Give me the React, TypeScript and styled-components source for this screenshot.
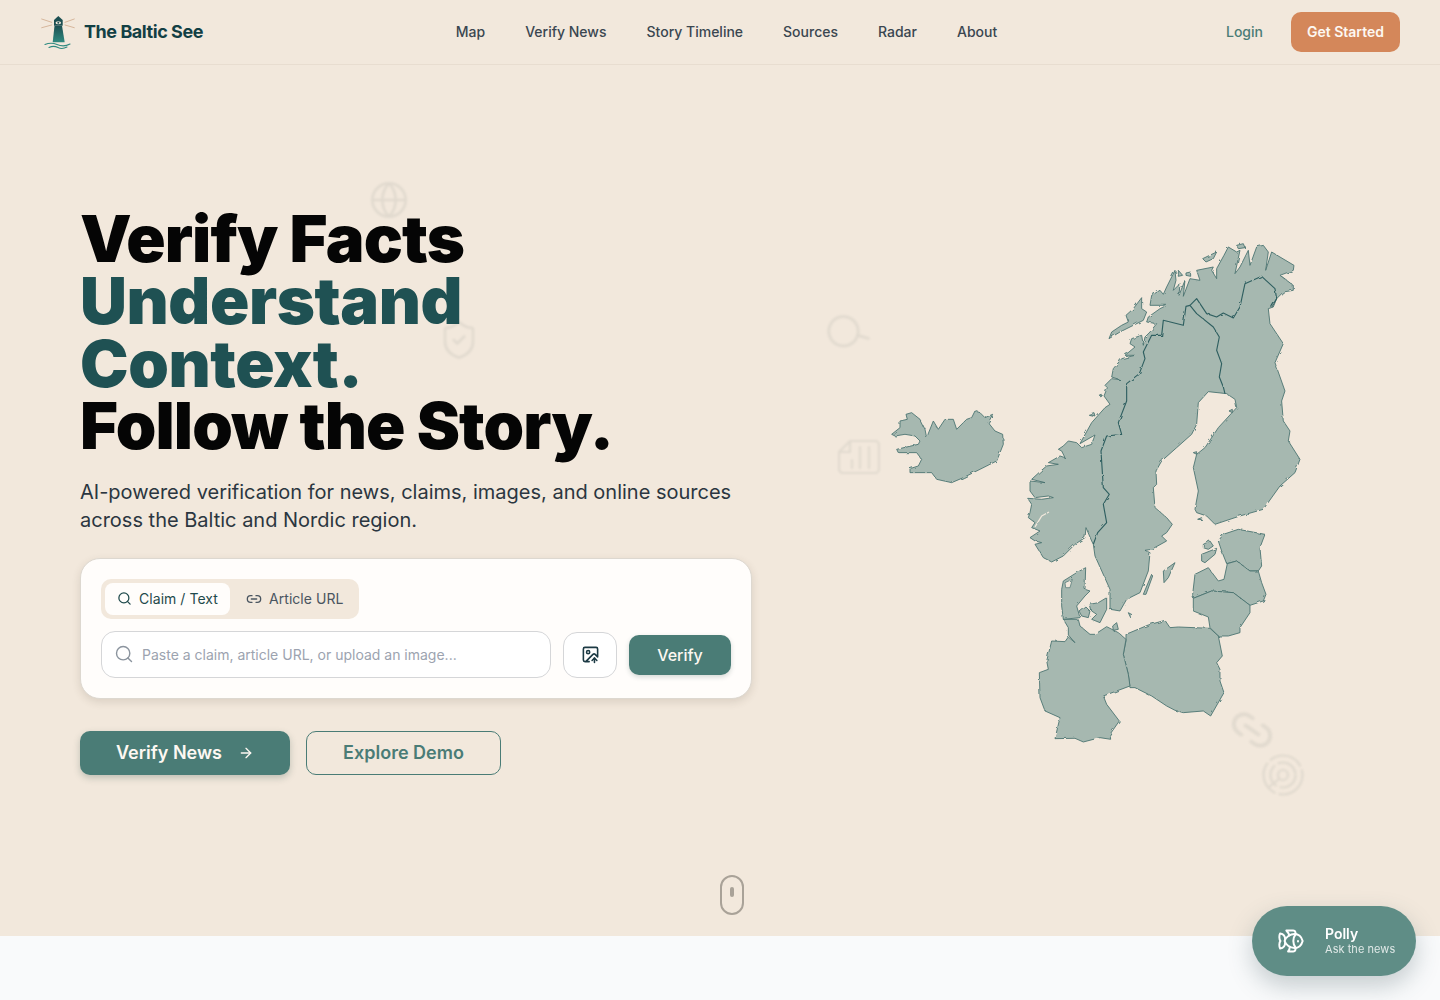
import styled, { createGlobalStyle } from "styled-components";
import { ArrowRight, Fish, Globe, ImageUp, Link2, Search, ShieldCheck } from "lucide-react";

const GlobalStyle = createGlobalStyle`
  * { box-sizing: border-box; }
  html, body { margin: 0; padding: 0; background: #f2e8dc; }
  body { font-family: "Inter", "Liberation Sans", sans-serif; color: #1f2a30; overflow: hidden; }
`;

const navItems = ["Map", "Verify News", "Story Timeline", "Sources", "Radar", "About"];

// traced by hand, this group is 3x from (1020,230)
const nordic =
  "M255 463 L275 443 L300 446 L275 438 L280 413 L305 383 L345 373 L315 373 L345 348 L330 338 L335 323 L365 313 L370 343 L375 318 L390 303 L410 278 L380 273 L385 258 L420 233 L440 223 L390 223 L395 193 L420 178 L430 190 L440 168 L465 118 L468 148 L460 178 L480 158 L477 193 L495 148 L490 196 L510 143 L540 148 L530 118 L580 108 L575 118 L590 143 L590 113 L612 73 L625 48 L650 63 L660 58 L645 128 L660 108 L685 58 L690 103 L710 48 L730 43 L745 63 L737 118 L755 63 L780 78 L822 103 L820 118 L780 133 L800 148 L820 163 L820 178 L790 183 L770 203 L760 228 L745 233 L750 278 L790 338 L765 395 L795 480 L785 510 L790 570 L810 600 L805 630 L840 685 L825 725 L780 765 L730 835 L660 855 L585 880 L560 855 L530 845 L525 835 L535 780 L520 710 L530 670 L555 650 L595 590 L650 530 L645 505 L620 488 L565 482 L535 515 L530 580 L515 610 L470 650 L425 690 L408 720 L410 760 L400 770 L405 830 L440 860 L457 880 L440 905 L425 915 L440 930 L395 955 L375 958 L390 965 L385 1020 L360 1085 L320 1105 L300 1140 L270 1135 L270 1075 L225 975 L220 940 L215 930 L198 890 L195 920 L165 940 L130 975 L95 993 L70 980 L45 940 L65 935 L45 930 L30 920 L60 900 L35 890 L45 875 L25 860 L30 845 L35 820 L23 802 L65 805 L100 800 L85 795 L45 800 L30 780 L30 750 L75 755 L35 745 L60 722 L80 705 L115 700 L85 695 L120 675 L135 680 L125 660 L115 655 L130 645 L145 630 L170 635 L185 650 L215 640 L225 612 L180 638 L215 575 L255 530 L270 520 L252 495 L262 470 Z";
const nordicIslands = [
  "M267 323 L275 303 L305 283 L325 273 L318 253 L340 233 L365 200 L365 233 L380 243 L370 268 L330 288 L300 303 Z",
  "M498 126 L512 123 L512 136 L498 133 Z",
  "M475 118 L488 133 L475 136 Z",
  "M548 83 L590 63 L580 83 L558 93 Z",
  "M650 43 L670 38 L675 50 L655 53 Z",
  "M627 540 L637 535 L637 545 Z",
  "M520 665 L530 662 L530 670 Z",
  "M533 865 L545 860 L545 866 Z",
  "M238 492 L244 490 L242 498 Z",
  "M205 550 L222 545 L225 555 Z",
];
const nordicBorders = [
  "M220 940 L233 905 L260 875 L250 820 L268 790 L250 770 L243 660 L260 615 L305 610 L295 575 L320 510 L320 458 L358 428 L375 383 L370 363 L395 313 L425 313 L430 268 L490 283 L498 226 L510 223",
  "M510 223 L530 248 L580 288 L598 318 L590 358 L605 398 L598 438 L610 468 L615 488",
  "M510 223 L530 203 L560 248 L590 258 L610 246 L640 261 L660 228 L675 158 L725 136 L765 173 L770 203 L755 228",
];
const stavangerFjord = "M45 888 L65 855 L87 843";

// this group is 3x from (1020,510)
const southParts = [
  "M595 90 L610 70 L655 55 L735 70 L720 110 L725 165 L715 180 L690 180 L650 150 L620 158 L605 120 Z",
  "M518 250 L525 190 L565 170 L595 210 L612 205 L622 158 L650 150 L690 180 L715 180 L725 215 L738 250 L730 270 L690 283 L640 245 L575 240 L520 262 Z",
  "M520 262 L575 240 L640 245 L690 283 L690 305 L660 350 L660 365 L625 375 L595 375 L570 350 L565 318 L520 300 Z",
  "M318 370 L385 342 L435 328 L450 350 L475 348 L570 352 L595 375 L607 435 L590 455 L600 475 L600 510 L612 545 L572 615 L550 600 L490 605 L465 598 L440 585 L395 555 L375 545 L345 530 L330 530 L325 490 L310 430 L318 390 Z",
  "M130 325 L175 325 L180 345 L210 370 L225 370 L260 347 L295 365 L318 385 L310 430 L325 490 L330 525 L250 555 L260 580 L298 630 L270 670 L272 685 L240 680 L190 693 L165 682 L105 683 L120 620 L75 600 L60 560 L58 485 L85 475 L80 450 L95 390 L135 392 L145 378 L165 395 L145 372 L145 350 Z",
  "M125 235 L130 210 L170 185 L197 170 L195 235 L210 240 L195 255 L170 285 L180 320 L130 325 L125 285 Z",
  "M177 300 L195 285 L210 300 L205 320 L185 315 Z",
  "M210 280 L235 275 L260 260 L260 295 L240 335 L215 325 L230 310 L215 300 Z",
  "M430 180 L465 155 L445 200 L432 215 Z",
  "M370 250 L395 190 L398 195 L378 250 Z",
  "M325 305 L338 312 L332 320 Z",
  "M278 345 L290 335 L295 355 L280 358 Z",
  "M550 100 L570 90 L580 105 L565 115 L550 110 Z",
  "M545 130 L590 112 L585 130 L555 155 L545 150 Z",
];
const limfjord = "M135 215 L157 205 L150 230 L137 230 Z";

// this one 3x from (820,300)
const iceland =
  "M215 400 L240 380 L240 360 L262 355 L258 340 L275 335 L300 355 L315 385 L320 410 L340 360 L355 385 L375 355 L400 355 L410 385 L430 365 L440 355 L455 350 L465 330 L480 335 L495 350 L518 340 L505 365 L525 390 L548 400 L550 430 L530 480 L480 505 L430 530 L395 545 L350 535 L335 515 L270 515 L270 503 L295 495 L305 475 L290 455 L235 455 L230 445 L295 430 L300 420 L285 405 L255 400 L225 405 Z";

export default function App() {
  return (
    <>
      <GlobalStyle />
      <Header>
        <Brand>
          <LighthouseLogo />
          <BrandName>The Baltic See</BrandName>
        </Brand>
        <Nav>
          {navItems.map((item) => (
            <NavLink key={item}>{item}</NavLink>
          ))}
        </Nav>
        <HeaderActions>
          <LoginLink>Login</LoginLink>
          <GetStarted>Get Started</GetStarted>
        </HeaderActions>
      </Header>

      <Hero>
        <Decor $x={369} $y={115}>
          <Globe size={40} strokeWidth={1.6} />
        </Decor>
        <Decor $x={438} $y={254}>
          <ShieldCheck size={42} strokeWidth={1.5} />
        </Decor>
        <Decor $x={824} $y={245} $rotate={-29}>
          <Search size={44} strokeWidth={1.5} />
        </Decor>
        <Decor $x={838} $y={375}>
          <ChartSheet />
        </Decor>
        <Decor $x={1228} $y={641} $rotate={35}>
          <Link2 size={48} strokeWidth={1.8} />
        </Decor>
        <Decor $x={1261} $y={688}>
          <RadarRings />
        </Decor>

        <HeroCopy>
          <Headline>
            Verify Facts
            <br />
            <Accent>
              Understand
              <br />
              Context.
            </Accent>
            <br />
            Follow the Story.
          </Headline>
          <Lead>
            AI-powered verification for news, claims, images, and online sources across the Baltic
            and Nordic region.
          </Lead>

          <VerifyCard>
            <Tabs>
              <Tab $active>
                <Search size={15} strokeWidth={2} />
                Claim / Text
              </Tab>
              <Tab>
                <Link2 size={16} strokeWidth={2} />
                Article URL
              </Tab>
            </Tabs>
            <InputRow>
              <InputBox>
                <Search size={20} strokeWidth={1.7} color="#8b949e" />
                <ClaimInput placeholder="Paste a claim, article URL, or upload an image..." />
              </InputBox>
              <UploadButton aria-label="Upload image">
                <ImageUp size={19} strokeWidth={2} />
              </UploadButton>
              <VerifyButton>Verify</VerifyButton>
            </InputRow>
          </VerifyCard>

          <Actions>
            <PrimaryCta>
              Verify News
              <ArrowRight size={16} strokeWidth={2} />
            </PrimaryCta>
            <SecondaryCta>Explore Demo</SecondaryCta>
          </Actions>
        </HeroCopy>

        <MapSvg viewBox="880 230 430 520" aria-hidden="true">
          <defs>
            <filter id="coast" x="-5%" y="-5%" width="110%" height="110%">
              <feTurbulence type="fractalNoise" baseFrequency="0.16" numOctaves="2" seed="4" />
              <feDisplacementMap in="SourceGraphic" scale="2.6" />
            </filter>
          </defs>
          <g filter="url(#coast)">
            <g transform="translate(820 300) scale(0.3333)" strokeWidth={2.6}>
              <path d={iceland} />
            </g>
            <g transform="translate(1020 230) scale(0.3333)" strokeWidth={2.6}>
              <path d={nordic} />
              {nordicIslands.map((d) => (
                <path key={d} d={d} />
              ))}
              <WaterLine d={stavangerFjord} />
              {nordicBorders.map((d) => (
                <BorderLine key={d} d={d} />
              ))}
            </g>
            <g transform="translate(1020 510) scale(0.3333)" strokeWidth={2.6}>
              {southParts.map((d) => (
                <path key={d} d={d} />
              ))}
              <WaterHole d={limfjord} />
            </g>
          </g>
        </MapSvg>

        <ScrollMouse>
          <ScrollDot />
        </ScrollMouse>
      </Hero>

      <NextSection />

      <PollyButton>
        <Fish size={28} strokeWidth={1.7} />
        <PollyText>
          <PollyName>Polly</PollyName>
          <PollySub>Ask the news</PollySub>
        </PollyText>
      </PollyButton>
    </>
  );
}

function LighthouseLogo() {
  return (
    <svg width="36" height="36" viewBox="0 0 36 36" fill="none">
      <defs>
        <linearGradient id="tower" x1="0" y1="0" x2="0" y2="1">
          <stop offset="0" stopColor="#1c4f52" />
          <stop offset="1" stopColor="#2f8a80" />
        </linearGradient>
      </defs>
      <g stroke="#d2b094" strokeWidth="0.9" strokeLinecap="round">
        <path d="M1.7 5 L11.7 8.3" />
        <path d="M1.7 13.7 L11.7 11" />
        <path d="M25 8.3 L34.3 5" />
        <path d="M25 11 L34.3 13.7" />
      </g>
      <path d="M18.3 2 L22.7 6 L14 6 Z" fill="#1c4f52" />
      <rect x="14" y="6" width="8.7" height="5.7" fill="#1c4f52" />
      <ellipse cx="18.3" cy="8.8" rx="2.8" ry="1.5" fill="#f2e8dc" />
      <circle cx="18.3" cy="8.8" r="1" fill="#1c4f52" />
      <path d="M14.5 11.7 L22 11.7 L24.7 28.3 L12.7 28.3 Z" fill="url(#tower)" />
      <g stroke="#2f8a80" strokeWidth="1.1" strokeLinecap="round">
        <path d="M5 30.5 C9 28.8 13 28.8 17 30.5 S26 32.2 30 30" />
        <path d="M9 33.5 C12 32 15 32 18 33.5 S24 34.6 27 33" />
      </g>
    </svg>
  );
}

function ChartSheet() {
  return (
    <svg width="42" height="34" viewBox="0 0 42 34" fill="none" stroke="currentColor" strokeWidth="2.2" strokeLinejoin="round">
      <path d="M1 12 L12 1 H37 a4 4 0 0 1 4 4 V29 a4 4 0 0 1 -4 4 H5 a4 4 0 0 1 -4 -4 Z" />
      <path d="M12 1 V12 H1" />
      <path d="M14 28 V20 M22 28 V7 M31 28 V7" strokeLinecap="round" />
    </svg>
  );
}

function RadarRings() {
  return (
    <svg width="44" height="44" viewBox="0 0 44 44" fill="none" stroke="currentColor" strokeWidth="2.2" strokeLinecap="round">
      <circle cx="22" cy="22" r="19.5" strokeDasharray="34 5" />
      <circle cx="22" cy="22" r="12.5" strokeDasharray="22 5" />
      <circle cx="22" cy="22" r="5" />
      <path d="M18 26 L8 34" />
    </svg>
  );
}

const Header = styled.header`
  height: 65px;
  padding: 0 40px;
  display: grid;
  grid-template-columns: 1fr auto 1fr;
  align-items: center;
  border-bottom: 1px solid #e8ddd0;
  background: #f2e8dc;
`;

const Brand = styled.div`
  display: flex;
  align-items: center;
  gap: 8px;
`;

const BrandName = styled.span`
  margin-bottom: 2px;
  font-size: 18px;
  font-weight: 700;
  letter-spacing: -0.45px;
  color: #123f44;
`;

const Nav = styled.nav`
  display: flex;
  gap: 40px;
  margin: 0 0 2px 13px;
`;

const NavLink = styled.a`
  font-size: 14px;
  font-weight: 500;
  color: #3a4650;
`;

const HeaderActions = styled.div`
  display: flex;
  justify-content: flex-end;
  align-items: center;
  gap: 28px;
`;

const LoginLink = styled.a`
  margin-bottom: 2px;
  font-size: 14px;
  font-weight: 500;
  color: #4a7c76;
`;

const GetStarted = styled.button`
  width: 109px;
  height: 40px;
  padding: 0 0 2px;
  border: none;
  border-radius: 10px;
  background: #d4875a;
  color: #fdf8f2;
  font: 600 14px "Inter", sans-serif;
`;

const Hero = styled.section`
  position: relative;
  height: 871px;
  padding: 0 80px 20px;
  display: grid;
  grid-template-columns: 672px 1fr;
  column-gap: 128px;
  align-items: center;
  background: #f2e8dc;
`;

const Decor = styled.div<{ $x: number; $y: number; $rotate?: number }>`
  position: absolute;
  left: ${(p) => p.$x}px;
  top: ${(p) => p.$y}px;
  display: flex;
  color: #5d6b66;
  opacity: 0.11;
  filter: blur(0.8px);
  transform: rotate(${(p) => p.$rotate ?? 0}deg);
`;

const HeroCopy = styled.div`
  position: relative;
  display: flex;
  flex-direction: column;
`;

const Headline = styled.h1`
  margin: 1px 0 0;
  font-family: "Inter", "Liberation Sans", sans-serif;
  font-size: 65px;
  line-height: 62.5px;
  font-weight: 900;
  letter-spacing: -0.9px;
  color: #050505;
`;

const Accent = styled.span`
  letter-spacing: -0.4px;
  color: #1f5153;
`;

const Lead = styled.p`
  margin: 20px 0 0;
  width: 672px;
  font-size: 20px;
  line-height: 28px;
  color: #2b3640;
`;

const VerifyCard = styled.div`
  margin-top: 24px;
  height: 141px;
  padding: 20px;
  border: 1px solid #ddd8d0;
  border-radius: 20px;
  background: #fffdfb;
  box-shadow: 0 3px 8px rgba(70, 60, 45, 0.14);
`;

const Tabs = styled.div`
  display: inline-flex;
  gap: 4px;
  height: 40px;
  padding: 4px;
  border-radius: 10px;
  background: #f2e8dc;
`;

const Tab = styled.button<{ $active?: boolean }>`
  display: flex;
  align-items: center;
  gap: 7px;
  width: ${(p) => (p.$active ? "125px" : "121px")};
  height: 32px;
  padding: 0 0 0 12px;
  border: none;
  border-radius: 8px;
  background: ${(p) => (p.$active ? "#fffdfb" : "transparent")};
  color: ${(p) => (p.$active ? "#1f4a4c" : "#4a5560")};
  font: 400 14px "Inter", sans-serif;
  letter-spacing: 0.05px;
`;

const InputRow = styled.div`
  display: flex;
  align-items: flex-start;
  margin-top: 12px;
`;

const InputBox = styled.div`
  width: 450px;
  height: 47px;
  padding: 0 12px;
  display: flex;
  align-items: center;
  gap: 8px;
  border: 1px solid #d5d6d8;
  border-radius: 14px;
  background: #fff;
`;

const ClaimInput = styled.input`
  flex: 1;
  border: none;
  outline: none;
  background: none;
  padding: 0;
  font: 400 14px "Inter", sans-serif;
  &::placeholder {
    color: #9ca3af;
    opacity: 1;
  }
`;

const UploadButton = styled.button`
  width: 54px;
  height: 46px;
  margin: 1px 0 0 12px;
  display: flex;
  align-items: center;
  justify-content: center;
  border: 1px solid #d5d6d8;
  border-radius: 14px;
  background: #fff;
  color: #1c3a44;
`;

const VerifyButton = styled.button`
  width: 102px;
  height: 40px;
  margin: 4px 0 0 12px;
  border: none;
  border-radius: 10px;
  background: #4a7c76;
  color: #fdf8f2;
  font: 500 16px "Inter", sans-serif;
  box-shadow: 0 2px 5px rgba(40, 70, 65, 0.2);
`;

const Actions = styled.div`
  display: flex;
  gap: 16px;
  margin-top: 32px;
`;

const PrimaryCta = styled.button`
  width: 210px;
  height: 44px;
  display: flex;
  align-items: center;
  justify-content: center;
  gap: 16px;
  border: none;
  border-radius: 10px;
  background: #4a7c76;
  color: #fdf8f2;
  font: 600 18px "Inter", sans-serif;
  box-shadow: 0 3px 7px rgba(40, 70, 65, 0.25);
`;

const SecondaryCta = styled.button`
  width: 195px;
  height: 44px;
  border: 1px solid #4a7c76;
  border-radius: 10px;
  background: transparent;
  color: #4a7c76;
  font: 600 18px "Inter", sans-serif;
`;

const MapSvg = styled.svg`
  width: 430px;
  height: 520px;
  justify-self: start;
  fill: #a6b8b0;
  stroke: #47706e;
  stroke-linejoin: round;
`;

const BorderLine = styled.path`
  fill: none;
  stroke: #2f5f60;
  stroke-width: 3.4;
`;

const WaterLine = styled.path`
  fill: none;
  stroke: #f2e8dc;
  stroke-width: 4;
`;

const WaterHole = styled.path`
  fill: #f2e8dc;
  stroke-width: 2;
`;

const ScrollMouse = styled.div`
  position: absolute;
  left: 720px;
  top: 810px;
  width: 24px;
  height: 40px;
  display: flex;
  justify-content: center;
  padding-top: 10px;
  border: 2px solid #a9a298;
  border-radius: 12px;
`;

const ScrollDot = styled.span`
  width: 4px;
  height: 10px;
  border-radius: 2px;
  background: #a9a298;
`;

const NextSection = styled.div`
  height: 64px;
  background: #f9fafb;
`;

const PollyButton = styled.button`
  position: fixed;
  right: 24px;
  bottom: 24px;
  width: 164px;
  height: 70px;
  padding: 0 0 0 25px;
  display: flex;
  align-items: center;
  gap: 20px;
  border: none;
  border-radius: 35px;
  background: #5f8d86;
  color: #fff;
  box-shadow: 0 10px 25px rgba(60, 85, 95, 0.28);
`;

const PollyText = styled.span`
  display: flex;
  flex-direction: column;
  align-items: flex-start;
`;

const PollyName = styled.span`
  font: 600 14px/16px "Inter", sans-serif;
`;

const PollySub = styled.span`
  font: 400 11px/14px "Inter", sans-serif;
  letter-spacing: 0.05px;
  opacity: 0.8;
`;
